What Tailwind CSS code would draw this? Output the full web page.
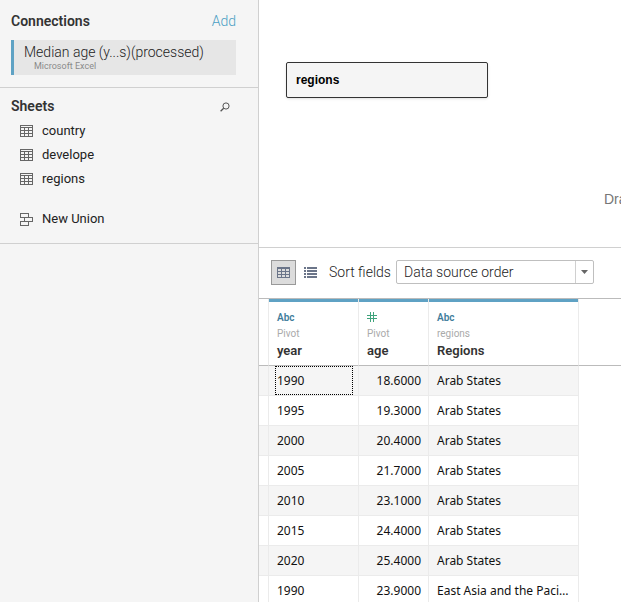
<!DOCTYPE html>
<html lang="en">
<head>
<meta charset="utf-8">
<title>Data Source</title>
<script src="https://cdn.jsdelivr.net/npm/@tailwindcss/browser@4"></script>
</head>
<body class="flex h-screen overflow-hidden bg-white font-['Roboto',sans-serif] text-[#333]">
<svg class="hidden">
  <symbol id="sheet" viewBox="0 0 13 12"><path d="M.5 .5h12v11H.5zM.5 2.5h12M.5 5.5h12M.5 8.5h12M4.5 2.5v9M8.5 2.5v9" fill="none" stroke="#666" shape-rendering="crispEdges"/></symbol>
</svg>

<aside class="w-[259px] shrink-0 border-r border-[#d0d0d0] bg-[#f5f5f5]">
  <section class="h-[88px] border-b border-[#d0d0d0] pt-[11px] pr-[22px] pl-[11px]">
    <header class="flex h-5 items-center justify-between">
      <h2 class="text-[14px] leading-5 font-semibold">Connections</h2>
      <a href="#" class="text-[14px] leading-5 font-light text-[#4b9fc4]">Add</a>
    </header>
    <div class="mt-[9px] h-[35px] border-l-3 border-[#5fa2c4] bg-[#e6e6e6] pl-[10px]">
      <p class="pt-1 text-[14px] leading-4 font-light text-[#222]">Median age (y...s)(processed)</p>
      <p class="pl-[10px] text-[9px] leading-3 text-[#8a8a8a]">Microsoft Excel</p>
    </div>
  </section>
  <section class="h-[156px] border-b border-[#d0d0d0] pt-[8px] pl-[11px]">
    <header class="flex h-[23px] items-start justify-between pr-[28px]">
      <h2 class="text-[14px] leading-5 font-semibold">Sheets</h2>
      <button type="button" aria-label="Search sheets" class="mt-[6px]">
        <svg class="h-[10px] w-[10px]" viewBox="0 0 10 10" fill="none" stroke="#555"><circle cx="6" cy="4" r="3.1"/><path d="M3.7 6.3L.6 9.3" stroke-width="1.3"/></svg>
      </button>
    </header>
    <ul class="pl-[9px] text-[13px] text-[#222]">
      <li class="flex h-6 items-center gap-[9px]"><svg class="h-3 w-[13px]"><use href="#sheet"/></svg>country</li>
      <li class="flex h-6 items-center gap-[9px]"><svg class="h-3 w-[13px]"><use href="#sheet"/></svg>develope</li>
      <li class="flex h-6 items-center gap-[9px]"><svg class="h-3 w-[13px]"><use href="#sheet"/></svg>regions</li>
    </ul>
    <button type="button" class="mt-4 ml-[9px] flex h-6 items-center gap-[9px] text-[13px] text-[#222]">
      <svg class="h-[13px] w-[13px]" viewBox="0 0 13 13" fill="none" stroke="#666" shape-rendering="crispEdges"><path d="M.5 .5h8v4h-8zM4.5 4.5h8v4h-8zM.5 8.5h8v4h-8z"/></svg>New Union
    </button>
  </section>
</aside>

<main class="flex min-w-0 flex-1 flex-col overflow-hidden">
  <section class="relative h-[248px] shrink-0 overflow-hidden border-b border-[#d0d0d0]">
    <div class="absolute top-[62px] left-[27px] flex h-9 w-[202px] items-center rounded-xs border border-[#333] bg-[#f5f5f5] pl-[9px] font-['Liberation_Sans',sans-serif] text-[12px] font-bold text-black shadow">regions</div>
    <p class="absolute top-[189px] left-[345px] font-['Liberation_Sans',sans-serif] text-[14px] leading-5 whitespace-nowrap text-[#767676]">Drag</p>
  </section>

  <div class="flex h-[51px] shrink-0 items-center border-b border-[#bbb] pb-[2px] pl-3">
    <button type="button" aria-label="Grid view" class="flex h-[25px] w-[25px] items-center justify-center border border-[#999] bg-[#dcdcdc]">
      <svg class="h-[11px] w-[13px]" viewBox="0 0 13 11" shape-rendering="crispEdges"><path fill="#6b7589" d="M0 0h13v11H0z"/><path fill="#dcdcdc" d="M1 2h3v2H1zM5 2h3v2H5zM9 2h3v2H9zM1 5h3v2H1zM5 5h3v2H5zM9 5h3v2H9zM1 8h3v2H1zM5 8h3v2H5zM9 8h3v2H9z"/></svg>
    </button>
    <button type="button" aria-label="List view" class="ml-2">
      <svg class="h-[11px] w-[13px]" viewBox="0 0 13 11" fill="#6b7589" shape-rendering="crispEdges"><path d="M0 0h2v2H0zM3 0h10v2H3zM0 3h2v2H0zM3 3h10v2H3zM0 6h2v2H0zM3 6h10v2H3zM0 9h2v2H0zM3 9h10v2H3z"/></svg>
    </button>
    <label for="sort" class="ml-3 w-[67px] shrink-0 text-[14px] font-light whitespace-nowrap text-[#222]">Sort fields</label>
    <div class="relative w-[198px] shrink-0">
      <select id="sort" class="block h-6 w-full appearance-none rounded-xs border border-[#bfbfbf] bg-white pl-[7px] text-[14px] font-light text-[#222]"><option>Data source order</option></select>
      <span class="pointer-events-none absolute inset-y-px right-px flex w-[18px] items-center justify-center border-l border-[#d0d0d0]"><svg class="h-1 w-[7px]" viewBox="0 0 7 4"><path fill="#666" d="M0 0h7L3.5 4z"/></svg></span>
    </div>
  </div>

  <table class="w-full table-fixed border-separate border-spacing-0 text-left">
    <colgroup><col class="w-[10px]"><col class="w-[90px]"><col class="w-[70px]"><col class="w-[150px]"><col></colgroup>
    <thead class="[&_th]:h-[67px] [&_th]:border-b [&_th]:border-b-[#bbb] [&_th]:p-0 [&_th]:align-top">
      <tr>
        <th class="border-r border-r-[#ebebeb]"></th>
        <th class="border-r border-r-[#ebebeb]"><div class="border-t-3 border-[#5fa2c4] pt-2 pl-2"><p class="text-[10px] leading-4 font-semibold text-[#3f7d9b]">Abc</p><p class="text-[10px] leading-4 font-normal text-[#aaa]">Pivot</p><p class="text-[13px] leading-[18px] font-semibold">year</p></div></th>
        <th class="border-r border-r-[#ebebeb]"><div class="border-t-3 border-[#5fa2c4] pt-2 pl-2"><div class="flex h-4 items-start pt-[2px]"><svg class="h-[10px] w-[10px]" viewBox="0 0 10 10" stroke="#3fa37c" role="img" aria-label="Number" shape-rendering="crispEdges"><path d="M3.5 0v10M6.5 0v10M0 3.5h10M0 6.5h10"/></svg></div><p class="text-[10px] leading-4 font-normal text-[#aaa]">Pivot</p><p class="text-[13px] leading-[18px] font-semibold">age</p></div></th>
        <th class="border-r border-r-[#ebebeb]"><div class="border-t-3 border-[#5fa2c4] pt-2 pl-2"><p class="text-[10px] leading-4 font-semibold text-[#3f7d9b]">Abc</p><p class="text-[10px] leading-4 font-normal text-[#aaa]">regions</p><p class="text-[13px] leading-[18px] font-semibold">Regions</p></div></th>
        <th></th>
      </tr>
    </thead>
    <tbody id="rows" class="font-['Noto_Sans',sans-serif] text-[12px] text-[#111]"></tbody>
  </table>
</main>

<script>
const data = [
  ["1990", "18.6000", "Arab States"], ["1995", "19.3000", "Arab States"],
  ["2000", "20.4000", "Arab States"], ["2005", "21.7000", "Arab States"],
  ["2010", "23.1000", "Arab States"], ["2015", "24.4000", "Arab States"],
  ["2020", "25.4000", "Arab States"], ["1990", "23.9000", "East Asia and the Pacific"]
];
const cell = "h-[30px] border-r border-b border-[#ebebeb] p-0";
document.getElementById("rows").innerHTML = data.map(([year, age, region], i) => {
  const bg = i % 2 ? "bg-white" : "bg-[#f5f5f5]";
  const focus = i === 0 ? "border-black" : "border-transparent";
  return `<tr>
    <td class="${cell} ${bg}"></td>
    <td class="${cell} ${bg}"><div class="ml-[6px] mr-[5px] h-[29px] border border-dotted ${focus} pl-px leading-[27px]">${year}</div></td>
    <td class="${cell} ${bg}"><div class="pr-[7px] text-right">${age}</div></td>
    <td class="${cell} ${bg}"><div class="truncate px-2">${region}</div></td>
    <td></td></tr>`;
}).join("");
</script>
</body>
</html>
